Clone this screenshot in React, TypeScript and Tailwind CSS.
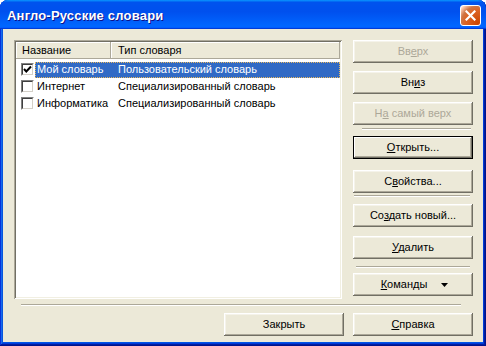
import React from "react";

const font = { fontFamily: '"Liberation Sans", Arial, sans-serif' };

type BtnProps = {
  children: React.ReactNode;
  disabled?: boolean;
  focused?: boolean;
  className?: string;
};

function Btn({ children, disabled, focused, className = "" }: BtnProps) {
  const bevel = focused
    ? "shadow-[inset_0_0_0_1px_#000,inset_-2px_-2px_#716f64,inset_2px_2px_#fff,inset_-3px_-3px_#aca899]"
    : "shadow-[inset_-1px_-1px_#716f64,inset_1px_1px_#fff,inset_-2px_-2px_#aca899,inset_2px_2px_#f5f3ea]";
  return (
    <div
      className={`w-[120px] h-[23px] shrink-0 flex items-center justify-center bg-[#ece9d8] text-[11px] leading-none ${bevel} ${
        disabled ? "text-[#aca899]" : "text-black"
      } ${className}`}
    >
      <span className="whitespace-pre">{children}</span>
    </div>
  );
}

function Sep({ className = "" }: { className?: string }) {
  return <div className={`h-0 border-t border-b border-t-[#aca899] border-b-white ${className}`} />;
}

function CheckBox({ checked }: { checked?: boolean }) {
  return (
    <div className="w-[13px] h-[13px] shrink-0 border border-t-[#808080] border-l-[#808080] border-b-white border-r-white">
      <div className="w-full h-full bg-white border border-t-[#404040] border-l-[#404040] border-b-[#d4d0c8] border-r-[#d4d0c8] flex items-center justify-center">
        {checked && (
          <svg width="9" height="9" viewBox="0 0 9 9">
            <path d="M1 4 L3.3 6.5 L8 1.5" fill="none" stroke="#000" strokeWidth="2" />
          </svg>
        )}
      </div>
    </div>
  );
}

const rows = [
  { name: "Мой словарь", type: "Пользовательский словарь", checked: true, selected: true },
  { name: "Интернет", type: "Специализированный словарь" },
  { name: "Информатика", type: "Специализированный словарь" },
];

export default function App() {
  return (
    <div className="w-[486px] h-[346px] bg-white" style={font}>
      <div className="w-[486px] h-[346px] flex flex-col rounded-t-[8px] overflow-hidden bg-[#0055e5] pb-[4px] shadow-[inset_-1px_-1px_#00138c,inset_1px_1px_#0831d9,inset_-2px_-2px_#001ea0,inset_2px_2px_#166aee,inset_-3px_-3px_#003bda,inset_3px_3px_#0855dd]">
        {/* title bar */}
        <div className="h-[29px] shrink-0 flex items-start justify-between pl-[7px] pr-[5px] bg-[linear-gradient(to_bottom,#0997ff,#0053ee_8%,#0050ee_40%,#0066ff_88%,#0066ff_93%,#005bff_95%,#003dd7_96%,#003dd7)]">
          <span className="mt-[8px] text-[13px] leading-[16px] font-bold text-white tracking-[0.2px] [text-shadow:1px_1px_#0f1089]">
            Англо-Русские словари
          </span>
          <div className="mt-[5px] w-[21px] h-[21px] rounded-[3px] border border-white bg-[radial-gradient(circle_at_90%_90%,#cc4600_0%,#dc6527_55%,#cd7546_70%,#ffccb2_90%,#fff_100%)] flex items-center justify-center">
            <svg width="11" height="11" viewBox="0 0 11 11">
              <path d="M1.5 1.5 L9.5 9.5 M9.5 1.5 L1.5 9.5" stroke="#fff" strokeWidth="2.2" strokeLinecap="square" />
            </svg>
          </div>
        </div>

        {/* body */}
        <div className="flex-1 mx-[3px] bg-[#ece9d8] flex flex-col">
          <div className="flex pl-[11px] pt-[11px] gap-[11px]">
            {/* list box */}
            <div className="w-[328px] h-[259px] bg-white p-[2px] shadow-[inset_1px_1px_#aca899,inset_-1px_-1px_#fff,inset_2px_2px_#716f64,inset_-2px_-2px_#f1efe2]">
              <div className="flex h-[17px] text-[11px] text-black">
                <div className="w-[95px] h-full bg-[#ece9d8] flex items-center pl-[6px] shadow-[inset_-1px_-1px_#aca899,inset_1px_1px_#fff]">
                  Название
                </div>
                <div className="flex-1 h-full bg-[#ece9d8] flex items-center pl-[7px] shadow-[inset_-1px_-1px_#aca899,inset_1px_1px_#fff]">
                  Тип словаря
                </div>
              </div>
              <div className="mt-[2px] flex flex-col">
                {rows.map((r) => (
                  <div key={r.name} className="h-[17px] flex items-center text-[11px] leading-none">
                    <div className="w-[19px] h-full flex items-center pl-[5px]">
                      <CheckBox checked={r.checked} />
                    </div>
                    <div
                      className={`flex-1 h-[16px] flex items-center border border-dotted ${
                        r.selected ? "bg-[#316ac5] text-white border-[#e8b860]" : "text-black border-transparent"
                      }`}
                    >
                      <div className="w-[75px] pl-[1px] whitespace-nowrap">{r.name}</div>
                      <div className="pl-[7px] whitespace-nowrap">{r.type}</div>
                    </div>
                  </div>
                ))}
              </div>
            </div>

            {/* right buttons */}
            <div className="flex flex-col w-[120px]">
              <Btn disabled>
                Вв<u>е</u>рх
              </Btn>
              <Btn className="mt-[8px]">
                Вн<u>и</u>з
              </Btn>
              <Btn disabled className="mt-[8px]">
                Н<u>а</u> самый верх
              </Btn>
              <Sep className="mt-[3px] ml-[9px] w-[109px]" />
              <Btn focused className="mt-[6px]">
                <u>О</u>ткрыть...
              </Btn>
              <Btn className="mt-[11px]">
                С<u>в</u>ойства...
              </Btn>
              <Sep className="mt-[2px] ml-[1px] w-[116px]" />
              <Btn className="mt-[7px]">
                Со<u>з</u>дать новый...
              </Btn>
              <Btn className="mt-[9px]">
                <u>У</u>далить
              </Btn>
              <Sep className="mt-[7px] ml-[3px] w-[114px]" />
              <Btn className="mt-[5px]">
                <span className="flex items-center gap-[14px] pl-[3px]">
                  <span>
                    <u>К</u>оманды
                  </span>
                  <svg width="7" height="4" viewBox="0 0 7 4">
                    <polygon points="0,0 7,0 3.5,4" fill="#000" />
                  </svg>
                </span>
              </Btn>
            </div>
          </div>

          <Sep className="mt-[5px] ml-[18px] w-[440px]" />

          <div className="mt-[7px] flex justify-end gap-[9px] pr-[10px]">
            <Btn>Закрыть</Btn>
            <Btn>
              <u>С</u>правка
            </Btn>
          </div>
        </div>
      </div>
    </div>
  );
}
